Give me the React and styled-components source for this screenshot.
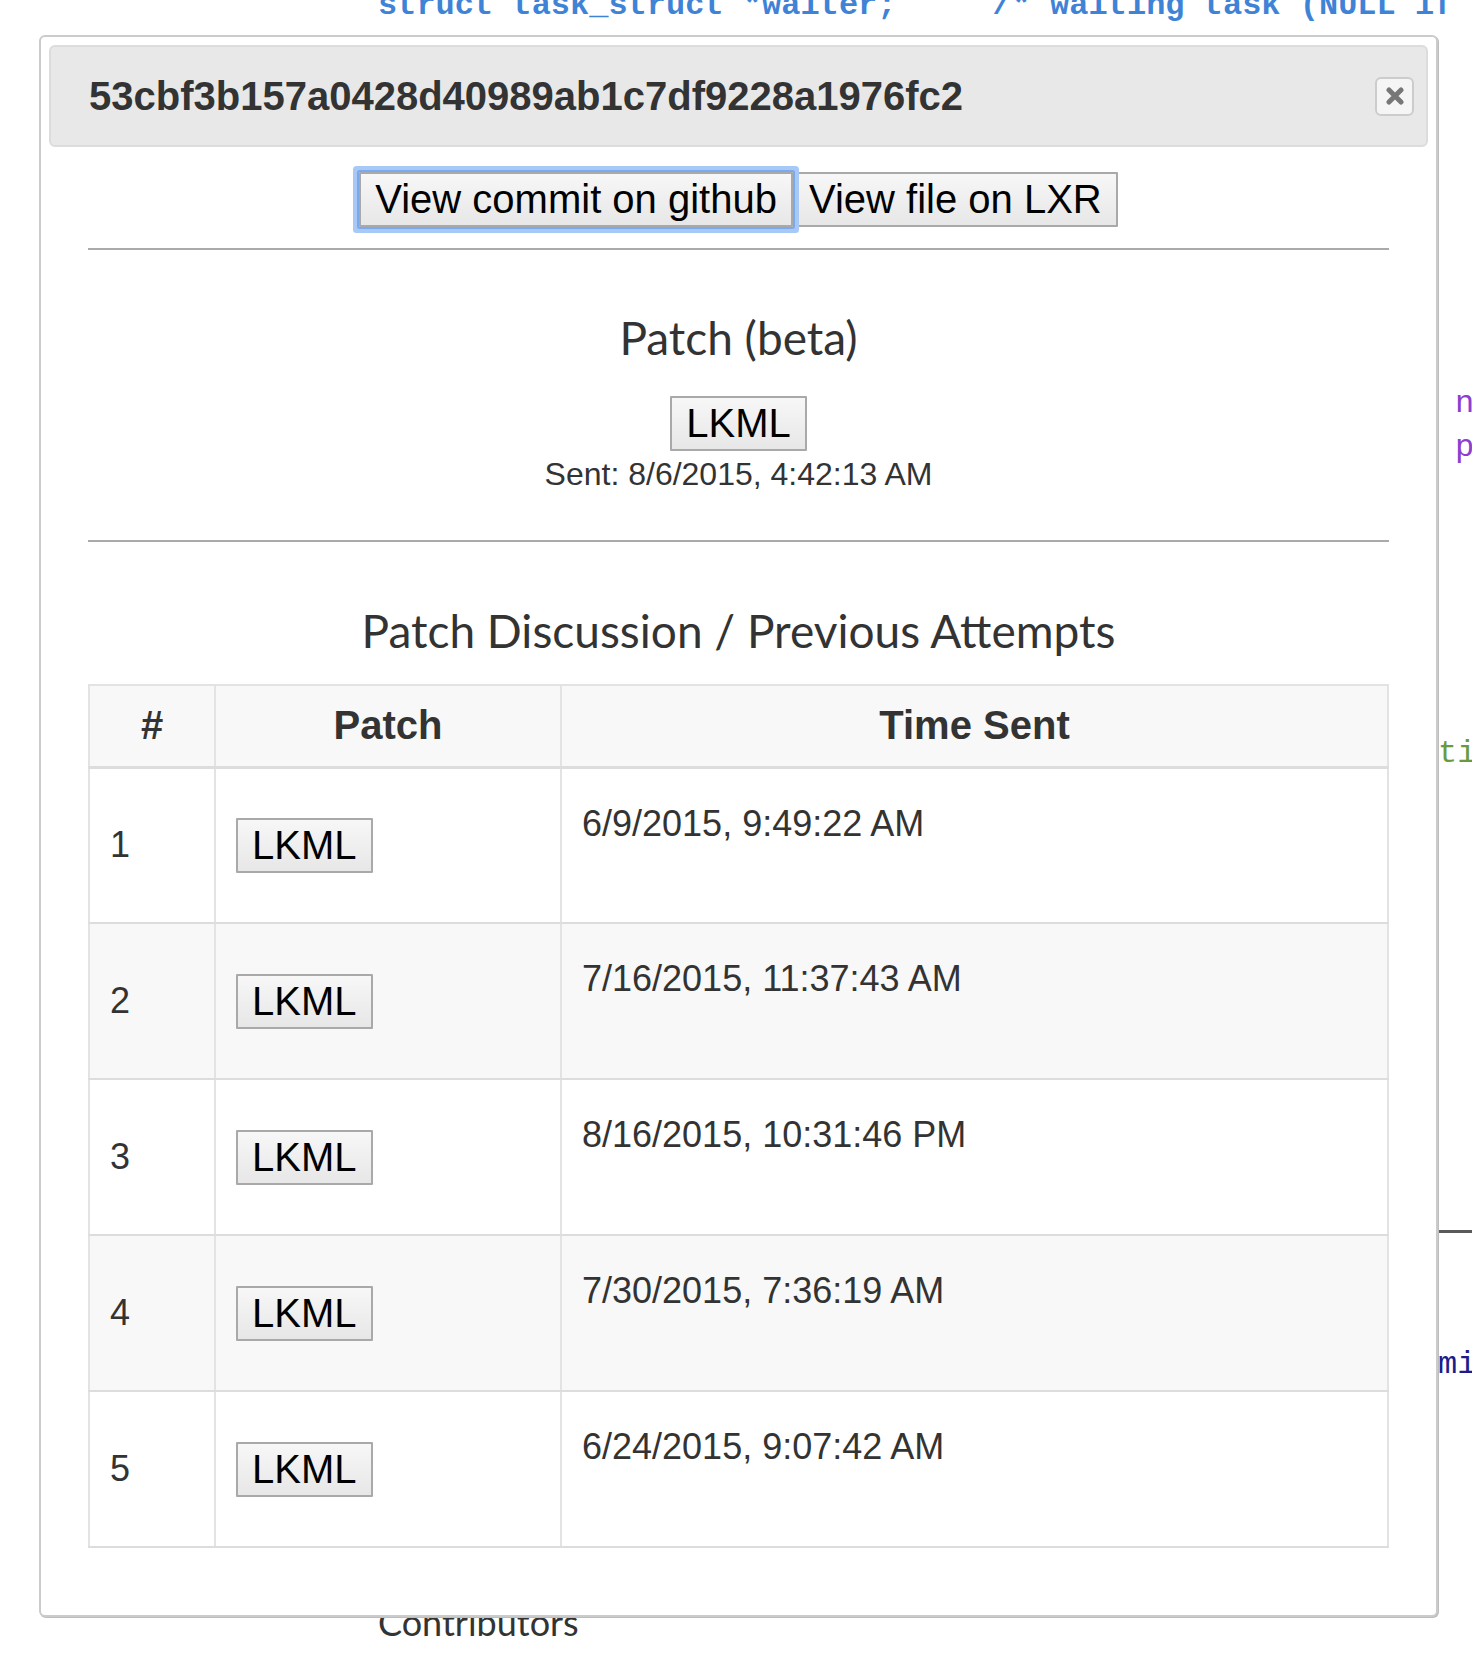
import React from "react";
import styled, { createGlobalStyle } from "styled-components";

const GlobalStyle = createGlobalStyle`
   html, body {
      margin: 0;
      padding: 0;
      background: #ffffff;
      overflow: hidden;
   }
`

const Page = styled.div`
   position: relative;
   width: 1472px;
   height: 1656px;
   overflow: hidden;
   font-family: "Liberation Sans", Arial, sans-serif;
`

/* page behind the dialog: fragments of a source listing */
const Backdrop = styled.div`
   display: flex;
   flex-direction: column;
`

const CodeLine = styled.div`
   margin-top: ${props => props.$gap}px;
   padding-left: ${props => props.$indent}px;
   height: 46px;
   line-height: 46px;
   font-family: "Liberation Mono", "Courier New", monospace;
   font-size: 32px;
   font-weight: ${props => (props.$bold ? 700 : 400)};
   color: ${props => props.$color};
   white-space: pre;
`

const PageRule = styled.div`
   margin-top: ${props => props.$gap}px;
   margin-left: 1437px;
   height: 3px;
   background: #5a5a5a;
`

const PageHeading = styled.div`
   margin-top: ${props => props.$gap}px;
   padding-left: 378px;
   font-family: Lato, "Open Sans", sans-serif;
   font-size: 36px;
   line-height: 44px;
   color: #333333;
`

/* the dialog */
const Modal = styled.div`
   position: absolute;
   left: 39px;
   top: 35px;
   width: 1399px;
   box-sizing: border-box;
   padding: 8px 8px 67px;
   background: #ffffff;
   border: 2px solid #cbcbcb;
   border-radius: 6px;
   box-shadow: 1px 1px 0 #bdbdbd;
`

const Header = styled.div`
   display: flex;
   align-items: center;
   justify-content: space-between;
   height: 102px;
   box-sizing: border-box;
   padding: 0 12px 0 38px;
   background: #e8e8e8;
   border: 2px solid #dcdcdc;
   border-radius: 6px;
`

const Title = styled.h1`
   margin: 0;
   font-size: 40px;
   font-weight: 700;
   color: #333333;
`

const CloseButton = styled.button`
   display: flex;
   align-items: center;
   justify-content: center;
   width: 39px;
   height: 39px;
   padding: 0;
   background: #f5f5f5;
   border: 2px solid #cccccc;
   border-radius: 6px;
   color: #777777;
`

const Body = styled.div`
   padding: 0 39px;
`

const ButtonRow = styled.div`
   display: flex;
   justify-content: center;
   margin-top: 25px;
`

const Button = styled.button`
   position: relative;
   height: 55px;
   box-sizing: border-box;
   padding: 0 14px;
   font-family: "Liberation Sans", Arial, sans-serif;
   font-size: 40px;
   color: #000000;
   background: linear-gradient(#f7f7f7, #e7e7e7);
   border: 2px solid #a9a9a9;
   border-radius: 1px;
   z-index: ${props => (props.$focused ? 1 : 0)};
   box-shadow: ${props => (props.$focused ? "0 0 0 2px #79a9ee, 0 0 0 6px #a8c8f5" : "none")};
`

const Rule = styled.hr`
   margin: ${props => props.$gap}px 0 0;
   border: 0;
   border-top: 2px solid #aaaaaa;
`

const Section = styled.div`
   display: flex;
   flex-direction: column;
   align-items: center;
`

const SectionTitle = styled.h2`
   margin: ${props => props.$gap}px 0 0;
   font-family: Lato, "Open Sans", sans-serif;
   font-weight: 400;
   font-size: 46px;
   line-height: ${props => props.$lh}px;
   color: #333333;
   text-align: center;
`

const SpacedButton = styled(Button)`
   margin-top: 34px;
`

const SentLine = styled.div`
   margin-top: 4px;
   font-size: 32px;
   line-height: 38px;
   color: #333333;
`

const Table = styled.table`
   width: 100%;
   margin-top: 27px;
   border-collapse: collapse;
   border: 2px solid #dddddd;
   font-size: 36px;
   color: #333333;
`

const HeadCell = styled.th`
   width: ${props => props.$width};
   height: 82px;
   padding: 0 20px;
   box-sizing: border-box;
   background: #f8f8f8;
   border: 2px solid #e3e3e3;
   border-bottom: 3px solid #dddddd;
   font-size: 40px;
   font-weight: 700;
   text-align: center;
   vertical-align: middle;
`

const Row = styled.tr`
   background: ${props => (props.$striped ? "#f8f8f8" : "#ffffff")};
`

const Cell = styled.td`
   height: 156px;
   padding: ${props => (props.$top ? "30px 20px 0" : "0 20px")};
   box-sizing: border-box;
   border: 2px solid #e3e3e3;
   border-bottom-color: #dddddd;
   border-top-color: #dddddd;
   vertical-align: ${props => (props.$top ? "top" : "middle")};
   line-height: 50px;
`

const CloseIcon = () => (
   <svg width="20" height="18" viewBox="0 0 20 18">
      <path d="M4 3 L16 15 M16 3 L4 15" stroke="currentColor" strokeWidth="5" strokeLinecap="round" />
   </svg>
)

const attempts = [
   "6/9/2015, 9:49:22 AM",
   "7/16/2015, 11:37:43 AM",
   "8/16/2015, 10:31:46 PM",
   "7/30/2015, 7:36:19 AM",
   "6/24/2015, 9:07:42 AM",
]

const App = () => {
   return (
      <Page>
         <GlobalStyle />
         <Backdrop>
            <CodeLine $gap={-17} $indent={378} $color="#3f83d6" $bold>
               {"struct task_struct *waiter;     /* waiting task (NULL if not) */"}
            </CodeLine>
            <CodeLine $gap={352} $indent={1455} $color="#8a40cf">{"next"}</CodeLine>
            <CodeLine $gap={-2} $indent={1455} $color="#8a40cf">{"prio"}</CodeLine>
            <CodeLine $gap={260} $indent={1438} $color="#6a9a3e">{"tion"}</CodeLine>
            <PageRule $gap={453} />
            <CodeLine $gap={109} $indent={1438} $color="#1c1c8c">{"mit"}</CodeLine>
            <PageHeading $gap={212}>Contributors</PageHeading>
         </Backdrop>

         <Modal>
            <Header>
               <Title>53cbf3b157a0428d40989ab1c7df9228a1976fc2</Title>
               <CloseButton aria-label="close">
                  <CloseIcon />
               </CloseButton>
            </Header>
            <Body>
               <ButtonRow>
                  <Button $focused>View commit on github</Button>
                  <Button>View file on LXR</Button>
               </ButtonRow>
               <Rule $gap={21} />
               <Section>
                  <SectionTitle $gap={64} $lh={48}>Patch (beta)</SectionTitle>
                  <SpacedButton>LKML</SpacedButton>
                  <SentLine>Sent: 8/6/2015, 4:42:13 AM</SentLine>
               </Section>
               <Rule $gap={47} />
               <SectionTitle $gap={63} $lh={52}>Patch Discussion / Previous Attempts</SectionTitle>
               <Table>
                  <thead>
                     <tr>
                        <HeadCell $width="126px">#</HeadCell>
                        <HeadCell $width="346px">Patch</HeadCell>
                        <HeadCell>Time Sent</HeadCell>
                     </tr>
                  </thead>
                  <tbody>
                     {attempts.map((time, i) => (
                        <Row key={time} $striped={i % 2 === 1}>
                           <Cell>{i + 1}</Cell>
                           <Cell>
                              <Button>LKML</Button>
                           </Cell>
                           <Cell $top>{time}</Cell>
                        </Row>
                     ))}
                  </tbody>
               </Table>
            </Body>
         </Modal>
      </Page>
   )
}

export default App;
